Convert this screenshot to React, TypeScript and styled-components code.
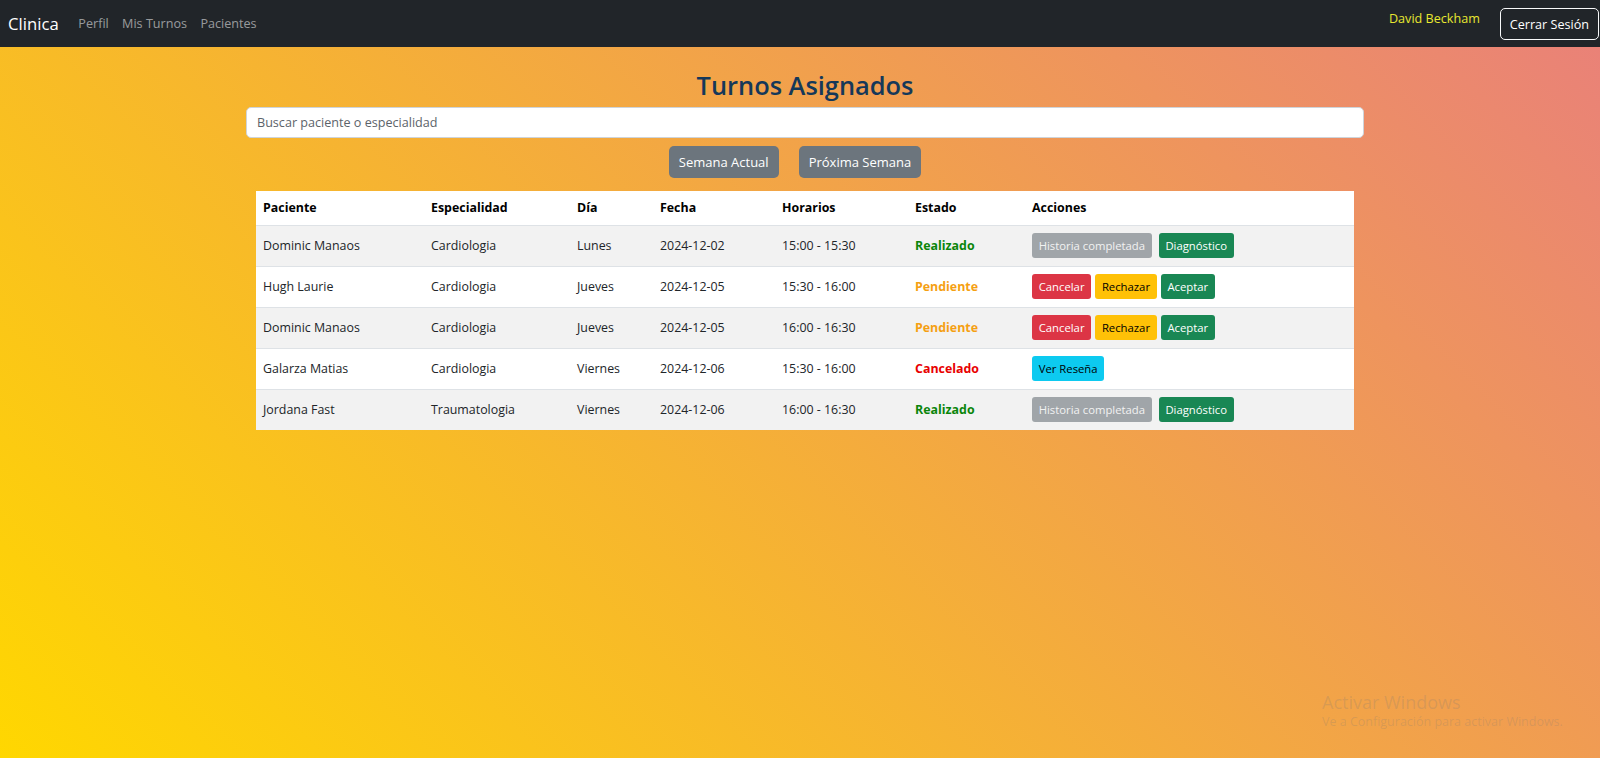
import React from "react";
import styled, { createGlobalStyle } from "styled-components";

const GlobalStyle = createGlobalStyle`
  * { box-sizing: border-box; }
  html, body { margin: 0; padding: 0; }
  body {
    font-family: "Open Sans", "Noto Sans", Arial, sans-serif;
    font-size: 12.4px;
    color: #212529;
  }
`;

const Page = styled.div`
  position: relative;
  min-height: 758px;
  background: linear-gradient(45deg, #ffd700 0%, #e9807a 100%);
`;

const NavBar = styled.nav`
  height: 47px;
  background: #212529;
  display: flex;
  align-items: center;
  padding: 0 1px 0 8px;
`;

const Brand = styled.span`
  color: #fff;
  font-size: 16.7px;
  margin-right: 13px;
`;

const NavLinks = styled.div`
  display: flex;
  flex: 1;
`;

const NavLink = styled.a`
  color: rgba(255, 255, 255, 0.55);
  font-size: 12.6px;
  padding: 0 6.7px;
  text-decoration: none;
`;

const UserName = styled.span`
  color: #e8e830;
  font-size: 12.6px;
  align-self: flex-start;
  margin-top: 10px;
  margin-right: 20px;
`;

const LogoutButton = styled.button`
  font-family: inherit;
  font-size: 12.6px;
  color: #fff;
  background: transparent;
  border: 1px solid #f8f9fa;
  border-radius: 5px;
  height: 32px;
  padding: 0 9px;
  margin-top: 1px;
`;

const Container = styled.main`
  width: 1118px;
  margin: 0 auto;
  padding-top: 22px;
  transform: translateX(5px);
`;

const Title = styled.h2`
  margin: 0 0 6px;
  text-align: center;
  font-size: 25.4px;
  line-height: 32px;
  font-weight: 600;
  color: #153859;
`;

const Search = styled.input`
  display: block;
  width: 100%;
  height: 31px;
  border: 1px solid #ced4da;
  border-radius: 5px;
  background: #fff;
  padding: 0 10px;
  font-family: inherit;
  font-size: 12.6px;
  color: #212529;
  &::placeholder { color: #5c636a; }
`;

const WeekBar = styled.div`
  display: flex;
  justify-content: center;
  margin-top: 8px;
`;

const WeekButton = styled.button`
  font-family: inherit;
  font-size: 13px;
  color: #fff;
  background: #6c757d;
  border: none;
  border-radius: 5px;
  height: 32px;
  padding: 0 10px;
  margin-right: 20px;
`;

const Table = styled.table`
  width: 1098px;
  margin: 13px 10px 0;
  border-collapse: collapse;
  background: #fff;
  table-layout: fixed;
`;

const Th = styled.th<{ $w?: number }>`
  width: ${(p) => (p.$w ? `${p.$w}px` : "auto")};
  text-align: left;
  font-weight: 700;
  color: #000;
  padding: 6.7px 7px;
  height: 34px;
  border-bottom: 1px solid #dee2e6;
`;

const Tr = styled.tr<{ $striped: boolean }>`
  background: ${(p) => (p.$striped ? "#f2f2f2" : "#fff")};
  border-bottom: 1px solid #dee2e6;
  &:last-child { border-bottom: none; }
`;

const Td = styled.td`
  padding: 6.7px 7px;
  height: 41px;
  vertical-align: middle;
  color: #212529;
`;

const Status = styled.span<{ $color: string }>`
  font-weight: 700;
  color: ${(p) => p.$color};
`;

const Actions = styled.div<{ $gap: number }>`
  display: flex;
  gap: ${(p) => p.$gap}px;
`;

const variants: Record<string, { bg: string; fg: string }> = {
  muted: { bg: "#a0a5a9", fg: "#f2f2f2" },
  success: { bg: "#198754", fg: "#fff" },
  danger: { bg: "#dc3545", fg: "#fff" },
  warning: { bg: "#ffc107", fg: "#000" },
  info: { bg: "#0dcaf0", fg: "#000" },
};

const ActionButton = styled.button<{ $v: string }>`
  font-family: inherit;
  font-size: 11.3px;
  height: 25px;
  padding: 0 6.7px;
  border: none;
  border-radius: 3px;
  background: ${(p) => variants[p.$v].bg};
  color: ${(p) => variants[p.$v].fg};
`;

const Watermark = styled.div`
  position: absolute;
  left: 1322px;
  top: 691px;
  color: rgba(120, 120, 120, 0.22);
  font-family: "Open Sans", Arial, sans-serif;
`;

const WmTitle = styled.div`
  font-size: 18px;
  line-height: 22px;
`;

const WmSub = styled.div`
  font-size: 12.5px;
  line-height: 17px;
`;

type Row = {
  paciente: string;
  esp: string;
  dia: string;
  fecha: string;
  hora: string;
  estado: "Realizado" | "Pendiente" | "Cancelado";
};

const rows: Row[] = [
  { paciente: "Dominic Manaos", esp: "Cardiologia", dia: "Lunes", fecha: "2024-12-02", hora: "15:00 - 15:30", estado: "Realizado" },
  { paciente: "Hugh Laurie", esp: "Cardiologia", dia: "Jueves", fecha: "2024-12-05", hora: "15:30 - 16:00", estado: "Pendiente" },
  { paciente: "Dominic Manaos", esp: "Cardiologia", dia: "Jueves", fecha: "2024-12-05", hora: "16:00 - 16:30", estado: "Pendiente" },
  { paciente: "Galarza Matias", esp: "Cardiologia", dia: "Viernes", fecha: "2024-12-06", hora: "15:30 - 16:00", estado: "Cancelado" },
  { paciente: "Jordana Fast", esp: "Traumatologia", dia: "Viernes", fecha: "2024-12-06", hora: "16:00 - 16:30", estado: "Realizado" },
];

const statusColor: Record<Row["estado"], string> = {
  Realizado: "#0a850a",
  Pendiente: "#f5a012",
  Cancelado: "#e80000",
};

function RowActions({ estado }: { estado: Row["estado"] }) {
  if (estado === "Realizado")
    return (
      <Actions $gap={7}>
        <ActionButton $v="muted">Historia completada</ActionButton>
        <ActionButton $v="success">Diagnóstico</ActionButton>
      </Actions>
    );
  if (estado === "Pendiente")
    return (
      <Actions $gap={4}>
        <ActionButton $v="danger">Cancelar</ActionButton>
        <ActionButton $v="warning">Rechazar</ActionButton>
        <ActionButton $v="success">Aceptar</ActionButton>
      </Actions>
    );
  return (
    <Actions $gap={4}>
      <ActionButton $v="info">Ver Reseña</ActionButton>
    </Actions>
  );
}

export default function App() {
  return (
    <Page>
      <GlobalStyle />
      <NavBar>
        <Brand>Clinica</Brand>
        <NavLinks>
          <NavLink>Perfil</NavLink>
          <NavLink>Mis Turnos</NavLink>
          <NavLink>Pacientes</NavLink>
        </NavLinks>
        <UserName>David Beckham</UserName>
        <LogoutButton>Cerrar Sesión</LogoutButton>
      </NavBar>
      <Container>
        <Title>Turnos Asignados</Title>
        <Search placeholder="Buscar paciente o especialidad" />
        <WeekBar>
          <WeekButton>Semana Actual</WeekButton>
          <WeekButton>Próxima Semana</WeekButton>
        </WeekBar>
        <Table>
          <thead>
            <tr>
              <Th $w={168}>Paciente</Th>
              <Th $w={146}>Especialidad</Th>
              <Th $w={83}>Día</Th>
              <Th $w={122}>Fecha</Th>
              <Th $w={133}>Horarios</Th>
              <Th $w={117}>Estado</Th>
              <Th>Acciones</Th>
            </tr>
          </thead>
          <tbody>
            {rows.map((r, i) => (
              <Tr key={i} $striped={i % 2 === 0}>
                <Td>{r.paciente}</Td>
                <Td>{r.esp}</Td>
                <Td>{r.dia}</Td>
                <Td>{r.fecha}</Td>
                <Td>{r.hora}</Td>
                <Td>
                  <Status $color={statusColor[r.estado]}>{r.estado}</Status>
                </Td>
                <Td>
                  <RowActions estado={r.estado} />
                </Td>
              </Tr>
            ))}
          </tbody>
        </Table>
      </Container>
      <Watermark>
        <WmTitle>Activar Windows</WmTitle>
        <WmSub>Ve a Configuración para activar Windows.</WmSub>
      </Watermark>
    </Page>
  );
}
